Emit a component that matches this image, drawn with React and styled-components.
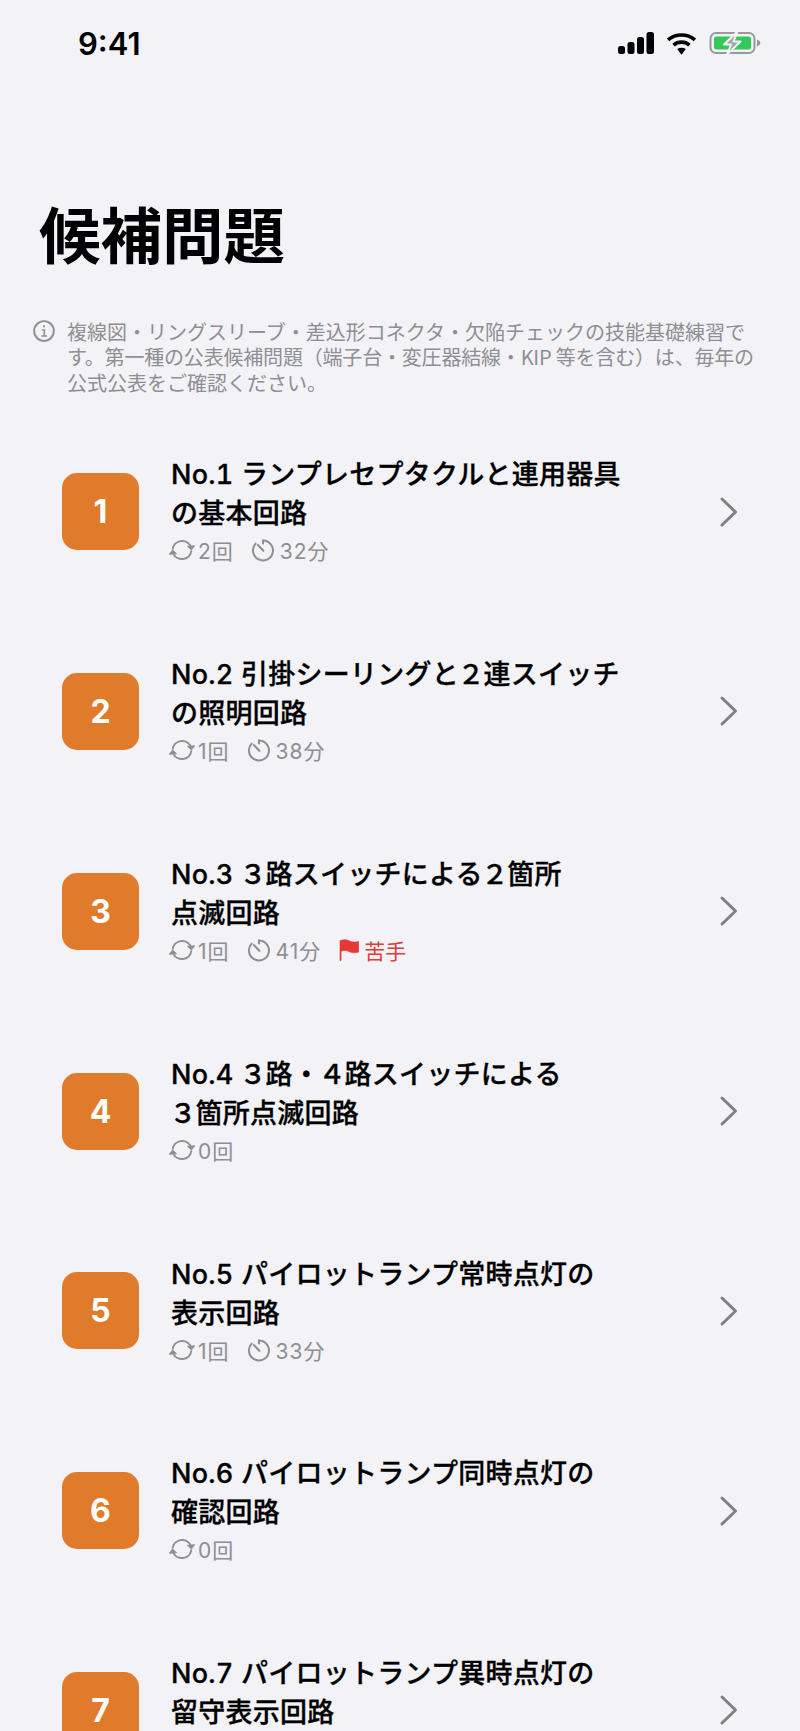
import React from "react";
import styled, { createGlobalStyle } from "styled-components";

const Global = createGlobalStyle`
  html, body { margin: 0; padding: 0; background: #f2f2f7; }
  body { width: 800px; height: 1731px; overflow: hidden; font-family: "Inter", "Noto Sans CJK JP", sans-serif; }
`;
const Page = styled.div`
  width: 800px; height: 1731px; overflow: hidden; background: #f2f2f7; color: #000;
  display: flex; flex-direction: column;
`;
const StatusBar = styled.div`
  height: 86px; flex: none; display: flex; align-items: center; justify-content: space-between;
  padding: 0 39px 0 78px; box-sizing: border-box;
`;
const Time = styled.div`
  font-family: "Inter", sans-serif; font-size: 31px; font-weight: 600; letter-spacing: 0; line-height: 1;
`;
const StatusIcons = styled.div`
  display: flex; align-items: center; gap: 12px;
`;
const Heading = styled.h1`
  margin: 108px 0 0 39px; font-size: 61.5px; line-height: 78px; font-weight: 700; letter-spacing: 0;
  font-family: "Noto Sans CJK JP", sans-serif;
`;
const Info = styled.div`
  margin: 47px 36px 0 33px; display: flex; gap: 13px; color: #8e8e93;
`;
const InfoIcon = styled.svg`
  width: 22px; height: 22px; flex: none; margin-top: 1px; margin-right: -1px;
`;
const InfoText = styled.p`
  margin: 0; font-size: 20px; line-height: 25.4px; white-space: nowrap;
  font-family: "Noto Sans CJK JP", sans-serif;
`;
const InfoLine = styled.span`
  display: block; letter-spacing: ${p => p.$tight ? "-0.19px" : "0"};
`;
const List = styled.div`
  margin-top: 16.5px; display: flex; flex-direction: column;
`;
const Row = styled.div`
  height: 199.8px; flex: none; box-sizing: border-box; padding: 0 61px 0 62px;
  display: flex; align-items: center;
`;
const Badge = styled.div`
  width: 77px; height: 77px; flex: none; border-radius: 15px; background: #e07b2b; color: #fff;
  display: flex; align-items: center; justify-content: center;
  font-family: "Inter", sans-serif; font-size: 32px; font-weight: 700;
`;
const Body = styled.div`
  flex: 1; margin-left: 32px; display: flex; flex-direction: column; margin-bottom: 2.4px;
`;
const Title = styled.div`
  font-size: 27px; line-height: 39px; font-weight: 500; white-space: pre-line; color: #000;
  letter-spacing: 0.25px; font-variant-numeric: tabular-nums;
  -webkit-text-stroke: 0.3px #000;
`;
const WideDigit = styled.span`
  margin-left: -1.5px; letter-spacing: -1px;
`;
const Meta = styled.div`
  display: flex; align-items: center; height: 30px; margin-top: 2px; margin-left: -2px; color: #8e8e93;
  font-size: 21px;
`;
const MetaItem = styled.span`
  display: inline-flex; align-items: center; gap: ${p => p.$gap || 5}px; margin-right: ${p => p.$wide ? 18 : 17}px;
  color: ${p => p.$red ? "#e53935" : "inherit"};
  letter-spacing: ${p => p.$red ? 0 : 1}px;
`;
const Chevron = styled.svg`
  width: 20px; height: 32px; flex: none;
`;

const Signal = () => (
  <svg width="36" height="22" viewBox="0 0 36 22">
    <rect x="0" y="14" width="7" height="8" rx="2.5" fill="#000" />
    <rect x="9.5" y="10" width="7" height="12" rx="2.5" fill="#000" />
    <rect x="19" y="5" width="7" height="17" rx="2.5" fill="#000" />
    <rect x="28.5" y="0" width="7.5" height="22" rx="2.5" fill="#000" />
  </svg>
);
const Wifi = () => (
  <svg width="31" height="23" viewBox="0 0 30 22" fill="none">
    <path d="M2 7.5C9.5 1.2 20.5 1.2 28 7.5" stroke="#000" strokeWidth="3.6" strokeLinecap="butt" />
    <path d="M7.3 12.6C11.7 8.8 18.3 8.8 22.7 12.6" stroke="#000" strokeWidth="3.6" />
    <path d="M10.8 16.4 15 22 19.2 16.4C16.6 14.6 13.4 14.6 10.8 16.4Z" fill="#000" />
  </svg>
);
const Battery = () => (
  <svg width="52" height="24" viewBox="0 -1 51 24" fill="none">
    <rect x="1" y="1" width="44" height="20" rx="5.5" stroke="#98989d" strokeWidth="2" />
    <rect x="4.5" y="4.5" width="37" height="13" rx="2.5" fill="#34c759" />
    <path d="M47.5 7.5c2 .7 3.3 2 3.3 3.5s-1.3 2.8-3.3 3.5Z" fill="#98989d" />
    <path d="M28 -.5 14.5 12.5H21.5L17.5 22.5 31 9.5H24Z" fill="#a5a5aa" stroke="#f2f2f7" strokeWidth="2" strokeLinejoin="round" />
  </svg>
);

const Repeat = () => (
  <svg width="26" height="24" viewBox="0 0 26 24" fill="none" stroke="#8e8e93" strokeWidth="2">
    <path d="M3.6 11.5A9.6 9.6 0 0 1 21.6 8" />
    <path d="M22.4 12.5A9.6 9.6 0 0 1 4.4 16" />
    <path d="M26 7.6 22.4 12.2 18.2 8.2Z" fill="#8e8e93" strokeWidth="0.6" />
    <path d="M0 16.4 3.6 11.8 7.8 15.8Z" fill="#8e8e93" strokeWidth="0.6" />
  </svg>
);
const Clock = () => (
  <svg width="24" height="24" viewBox="0 0 24 24" fill="none" stroke="#8e8e93" strokeWidth="2" strokeLinecap="round">
    <path d="M12 2.4A10 10 0 1 1 4.6 5.6" />
    <path d="M6.8 7 12.4 12.8" />
    <path d="M12 2.4V5.6" />
  </svg>
);
const Flag = () => (
  <svg width="20" height="22" viewBox="0 0 20 22">
    <path d="M1 1.5H1.6C5 .2 8 .6 10.5 2c2.7 1.4 5.5 1.4 9.2.4V13c-3.7 1.1-6.5 1.1-9.2-.3-2.8-1.4-5.7-1.5-8.4-.5V21.5H1Z" fill="#e53935" stroke="#e53935" strokeWidth="0.6" />
  </svg>
);

const items = [
  { n: 1, t: "No.1 ランプレセプタクルと連用器具\nの基本回路", c: "2回", m: "32分" },
  { n: 2, t: "No.2 引掛シーリングと２連スイッチ\nの照明回路", c: "1回", m: "38分" },
  { n: 3, t: "No.3 ３路スイッチによる２箇所\n点滅回路", c: "1回", m: "41分", flag: true },
  { n: 4, t: "No.4 ３路・４路スイッチによる\n３箇所点滅回路", c: "0回" },
  { n: 5, t: "No.5 パイロットランプ常時点灯の\n表示回路", c: "1回", m: "33分" },
  { n: 6, t: "No.6 パイロットランプ同時点灯の\n確認回路", c: "0回" },
  { n: 7, t: "No.7 パイロットランプ異時点灯の\n留守表示回路" },
];

const withDigits = t =>
  t.split(/([２３４])/).map((s, i) => (i % 2 ? <WideDigit key={i}>{s}</WideDigit> : s));

export default function App() {
  return (
    <Page>
      <Global />
      <StatusBar>
        <Time>9:41</Time>
        <StatusIcons><Signal /><Wifi /><Battery /></StatusIcons>
      </StatusBar>
      <Heading>候補問題</Heading>
      <Info>
        <InfoIcon viewBox="0 0 21 21" fill="none" stroke="#8e8e93" strokeWidth="1.8">
          <circle cx="10.5" cy="10.5" r="9.4" />
          <path d="M8.5 9.5h2.3v5.6M8 15.3h5.4" strokeWidth="1.5" />
          <circle cx="10.5" cy="6" r="1.1" fill="#8e8e93" stroke="none" />
        </InfoIcon>
        <InfoText>
          <InfoLine>複線図・リングスリーブ・差込形コネクタ・欠陥チェックの技能基礎練習で</InfoLine>
          <InfoLine $tight>す。第一種の公表候補問題（端子台・変圧器結線・KIP 等を含む）は、毎年の</InfoLine>
          <InfoLine>公式公表をご確認ください。</InfoLine>
        </InfoText>
      </Info>
      <List>
        {items.map(it => (
          <Row key={it.n}>
            <Badge>{it.n}</Badge>
            <Body>
              <Title>{withDigits(it.t)}</Title>
              <Meta>
                {it.c && <MetaItem $gap={3}><Repeat />{it.c}</MetaItem>}
                {it.m && <MetaItem $wide><Clock />{it.m}</MetaItem>}
                {it.flag && <MetaItem $red><Flag />苦手</MetaItem>}
              </Meta>
            </Body>
            <Chevron viewBox="0 0 20 32" fill="none" stroke="#7f7f84" strokeWidth="3" strokeLinecap="round" strokeLinejoin="round">
              <path d="M3 3 16.5 16 3 29" />
            </Chevron>
          </Row>
        ))}
      </List>
    </Page>
  );
}
